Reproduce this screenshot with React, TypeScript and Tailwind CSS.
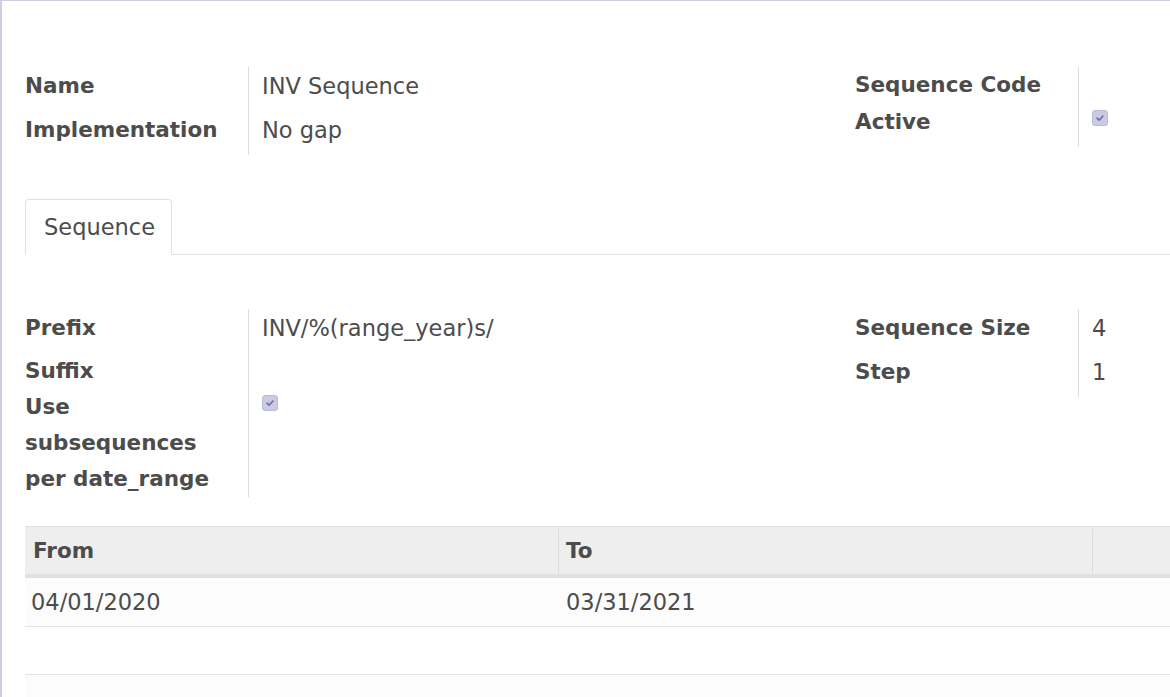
import React from 'react';

const font = { fontFamily: '"DejaVu Sans", "Liberation Sans", sans-serif' };

function Check() {
  return (
    <span className="flex h-4 w-4 items-center justify-center rounded-[3px] border border-[#bdbcd8] bg-[#cbcae3]">
      <svg width="10" height="10" viewBox="0 0 10 10" fill="none">
        <path d="M2 5.2 L4.1 7.2 L8 3" stroke="#6e6ba8" strokeWidth="1.6" strokeLinecap="round" strokeLinejoin="round" />
      </svg>
    </span>
  );
}

interface RowProps {
  label: React.ReactNode;
  children?: React.ReactNode;
  tall?: boolean;
}

function Row({ label, children, tall }: RowProps) {
  const pad = tall ? 'pt-[1px] pb-[7px]' : '';
  return (
    <div className="flex">
      <div className={`w-[224px] shrink-0 border-r border-[#dcdcdc] pr-4 text-[21.5px] font-bold leading-[36px] ${pad}`}>
        {label}
      </div>
      <div className={`pl-[13px] leading-[36px] ${pad}`}>{children}</div>
    </div>
  );
}

function Group({ children, width }: { children: React.ReactNode; width?: string }) {
  return <div className={`flex flex-col ${width ?? ''}`}>{children}</div>;
}

export default function App() {
  return (
    <div className="h-[697px] w-[1170px] overflow-hidden bg-white text-[22.5px] text-[#4c4c4c]" style={font}>
      <div className="h-full border-l-2 border-t border-[#cfcee0] pl-[23px] pt-[66px]">
        <div className="flex">
          <Group width="w-[830px]">
            <Row label="Name" tall>INV Sequence</Row>
            <Row label="Implementation" tall>No gap</Row>
          </Group>
          <Group>
            <Row label="Sequence Code" />
            <Row label="Active" tall>
              <div className="flex pt-[6px]"><Check /></div>
            </Row>
          </Group>
        </div>

        <div className="mt-[44px] flex">
          <div className="flex h-[56px] w-[147px] items-center rounded-t-[4px] border border-b-0 border-[#dee2e6] pl-[18px] pt-[1px]">
            Sequence
          </div>
          <div className="flex-1 self-end border-b border-[#dee2e6]" />
        </div>

        <div className="mt-[54px] flex">
          <Group width="w-[830px]">
            <Row label="Prefix" tall>INV/%(range_year)s/</Row>
            <Row label="Suffix" />
            <Row label="Use subsequences per date_range">
              <div className="flex pt-[6px]"><Check /></div>
            </Row>
          </Group>
          <Group>
            <Row label="Sequence Size" tall>4</Row>
            <Row label="Step" tall>1</Row>
          </Group>
        </div>

        <div className="mt-[29px] w-[1300px]">
          <div className="flex h-[52px] border-t border-b-4 border-[#dee2e6] bg-[#eeeeee] pt-[2px] text-[21.5px] font-bold">
            <div className="flex w-[534px] items-center border-r border-[#dcdcdc] pl-[8px]">From</div>
            <div className="flex w-[534px] items-center border-r border-[#dcdcdc] pl-[7px]">To</div>
            <div className="flex-1" />
          </div>
          <div className="flex h-[49px] items-center border-b border-[#e3e3e3] bg-[#fcfcfc] pt-[1px]">
            <div className="w-[534px] pl-[6px]">04/01/2020</div>
            <div className="pl-[7px]">03/31/2021</div>
          </div>
          <div className="h-[48px] border-b border-[#e3e3e3] bg-white" />
          <div className="h-[48px] bg-[#fcfcfc]" />
        </div>
      </div>
    </div>
  );
}
